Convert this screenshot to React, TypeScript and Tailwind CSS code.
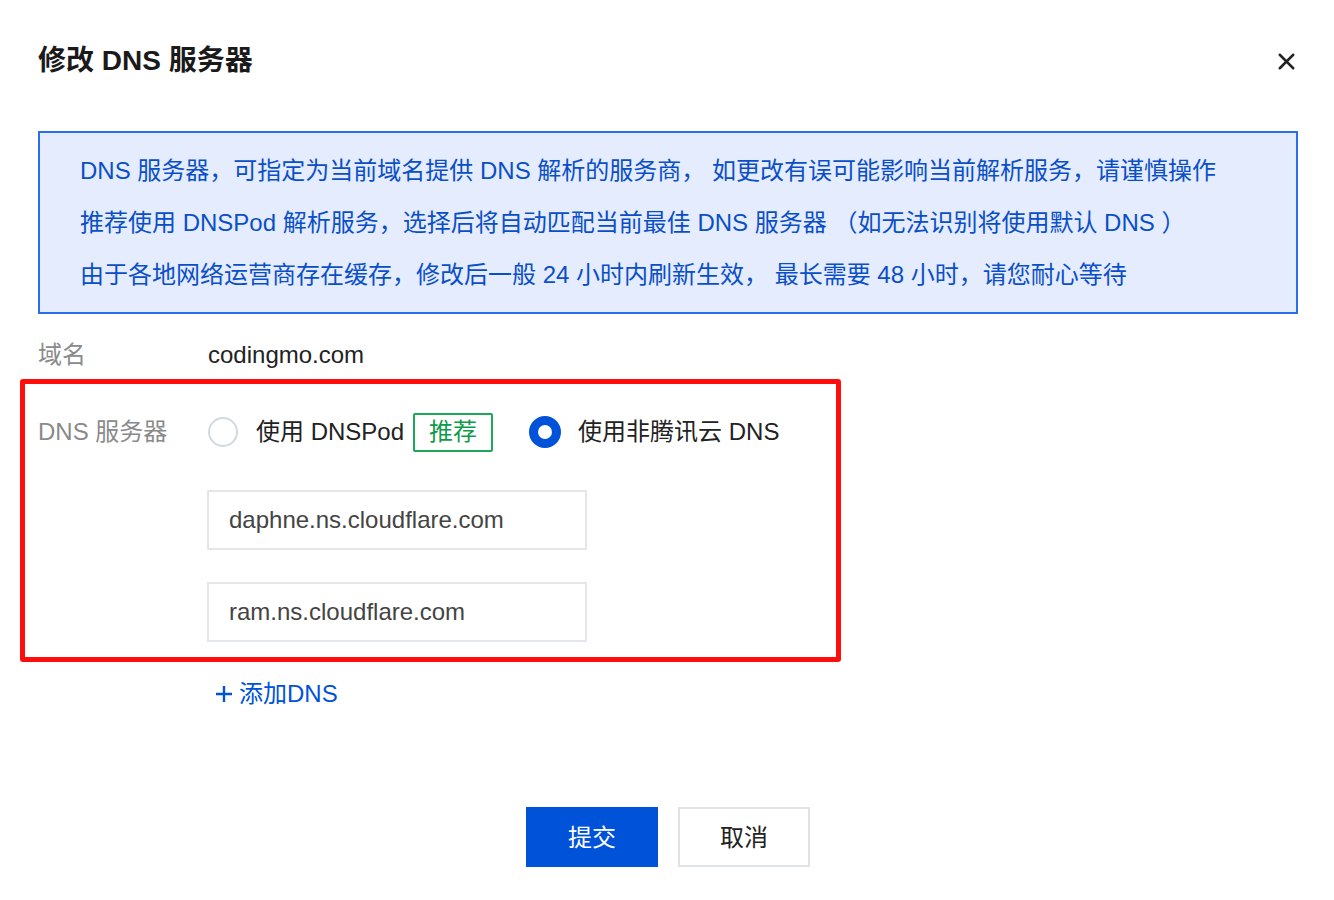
import { X } from 'lucide-react';

const font = { fontFamily: '"Liberation Sans", "Noto Sans CJK SC", sans-serif' };

const notices = [
  'DNS 服务器，可指定为当前域名提供 DNS 解析的服务商， 如更改有误可能影响当前解析服务，请谨慎操作',
  '推荐使用 DNSPod 解析服务，选择后将自动匹配当前最佳 DNS 服务器 （如无法识别将使用默认 DNS ）',
  '由于各地网络运营商存在缓存，修改后一般 24 小时内刷新生效， 最长需要 48 小时，请您耐心等待',
];

const servers = ['daphne.ns.cloudflare.com', 'ram.ns.cloudflare.com'];

export default function App() {
  return (
    <div className="w-[1334px] h-[900px] bg-white text-[#222]" style={font}>
      {/* Header */}
      <div className="flex items-center justify-between pl-[38px] pr-[34px] pt-[41px]">
        <h1 className="text-[28px] leading-[40px] font-bold text-[#1a1a1a]">修改 DNS 服务器</h1>
        <X className="w-[27px] h-[27px] text-[#222]" strokeWidth={2.2} />
      </div>

      <div className="pl-[38px] pr-[36px]">
        {/* Notice */}
        <div className="mt-[50px] border-2 border-[#2a6ee8] bg-[#e4ecfd] pl-[40px] pt-[12px] pb-[11px]">
          {notices.map((n) => (
            <p key={n} className="text-[24px] leading-[52px] text-[#0b4fc8] whitespace-pre">
              {n}
            </p>
          ))}
        </div>

        {/* Form */}
        <div className="mt-[21px] flex items-center h-[40px] text-[24px]">
          <span className="w-[170px] text-[#8a8a8a]">域名</span>
          <span className="text-[#222]">codingmo.com</span>
        </div>

        <div className="mt-[4px] ml-[-18px] w-[821px] border-[5px] border-[#ff0d0d] rounded-[3px] pl-[13px] pt-[28px] pb-[15px]">
          <div className="flex items-center h-[40px] text-[24px]">
            <span className="w-[170px] text-[#8a8a8a]">DNS 服务器</span>
            <div className="flex items-center">
              <span className="w-[30px] h-[30px] rounded-full border-2 border-[#d3d8e0] bg-white" />
              <span className="ml-[18px] text-[#222]">使用 DNSPod</span>
              <span className="ml-[9px] h-[39px] w-[80px] flex items-center justify-center border-2 border-[#1ba85a] rounded-[2px] text-[#0f9a4b]">
                推荐
              </span>
              <span className="ml-[36px] w-[32px] h-[32px] rounded-full border-[9px] border-[#0052d9] bg-white" />
              <span className="ml-[17px] text-[#222]">使用非腾讯云 DNS</span>
            </div>
          </div>

          <div className="ml-[169px] mt-[38px] flex flex-col gap-[32px]">
            {servers.map((s) => (
              <div
                key={s}
                className="w-[380px] h-[60px] border-2 border-[#e3e6ec] flex items-center pl-[20px] text-[24px] text-[#444]"
              >
                {s}
              </div>
            ))}
          </div>
        </div>

        <div className="mt-[12px] ml-[177px] h-[40px] flex items-center gap-[6px] text-[24px] text-[#0052d9]">
          <svg width="18" height="18" viewBox="0 0 18 18" fill="none" stroke="currentColor" strokeWidth="2.4">
            <path d="M9 1v16M1 9h16" />
          </svg>
          <span>添加DNS</span>
        </div>
      </div>

      {/* Footer */}
      <div className="mt-[93px] flex justify-center gap-[20px] pl-[2px]">
        <button className="w-[132px] h-[60px] pt-[2px] bg-[#0052d9] text-white text-[24px]">提交</button>
        <button className="w-[132px] h-[60px] pt-[2px] border-2 border-[#dfe3e9] bg-white text-[#222] text-[24px]">
          取消
        </button>
      </div>
    </div>
  );
}
